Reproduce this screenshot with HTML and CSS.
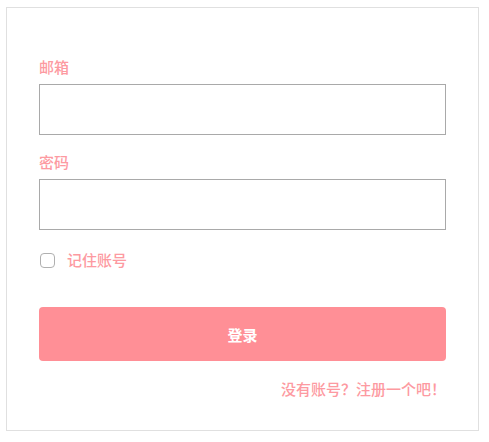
FILE: index.html
```html
<!DOCTYPE html>
<html lang="zh">
<head>
<meta charset="utf-8">
<link rel="stylesheet" href="styles.css">
</head>
<body>
<form class="card">
  <label class="label" for="email">邮箱</label>
  <input class="field" id="email" type="text">
  <label class="label label-gap" for="pwd">密码</label>
  <input class="field" id="pwd" type="password">
  <div class="remember">
    <span class="box"></span>
    <span class="remember-text">记住账号</span>
  </div>
  <button class="btn" type="button">登录</button>
  <div class="signup">没有账号？注册一个吧！</div>
</form>
</body>
</html>
```

FILE: styles.css
```css
html, body {
  margin: 0;
  padding: 0;
  background: #ffffff;
}
body {
  padding: 7px 0 0 6px;
  font-family: "Noto Sans CJK SC", "Noto Sans", sans-serif;
}
.card {
  box-sizing: border-box;
  width: 473px;
  height: 424px;
  border: 1px solid #e0e0e0;
  padding: 49px 32px 0 32px;
  display: flex;
  flex-direction: column;
  margin: 0;
}
.label {
  font-size: 15px;
  line-height: 20px;
  font-weight: 500;
  color: #fd9aa1;
  margin-bottom: 7px;
}
.label-gap {
  margin-top: 17px;
}
.field {
  box-sizing: border-box;
  height: 51px;
  width: 100%;
  border: 1px solid #a9a9a9;
  margin: 0;
  padding: 0 10px;
  outline: none;
  background: #fff;
}
.remember {
  display: flex;
  align-items: center;
  margin-top: 20px;
  height: 20px;
}
.box {
  box-sizing: border-box;
  width: 15px;
  height: 15px;
  border: 1px solid #b0b0b0;
  border-radius: 4px;
  margin-left: 1px;
}
.remember-text {
  margin-left: 12px;
  font-size: 15px;
  line-height: 20px;
  font-weight: 500;
  color: #fd9aa1;
}
.btn {
  margin-top: 37px;
  height: 54px;
  width: 100%;
  border: none;
  border-radius: 4px;
  background: #ff8f96;
  color: #ffffff;
  font-family: "Noto Sans CJK SC", "Noto Sans", sans-serif;
  font-size: 15px;
  font-weight: bold;
  padding: 0;
}
.signup {
  margin-top: 18px;
  text-align: right;
  font-size: 15px;
  line-height: 20px;
  font-weight: 500;
  color: #fd9aa1;
  padding-right: 0;
}
```
